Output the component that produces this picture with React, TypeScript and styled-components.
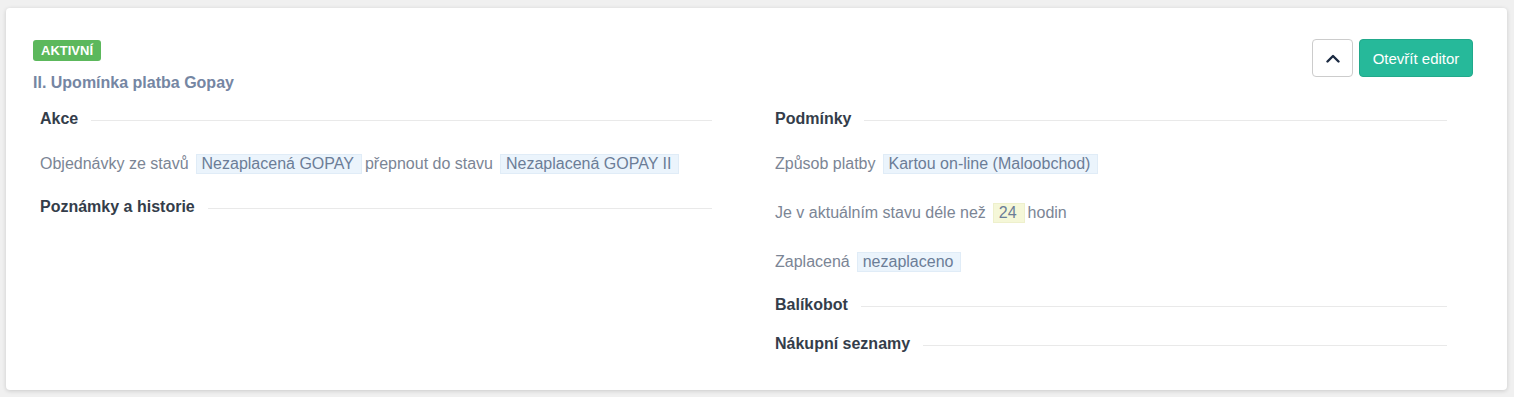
import styled, { createGlobalStyle } from "styled-components";

const GlobalStyle = createGlobalStyle`
  * { box-sizing: border-box; }
  body {
    margin: 0;
    background: #f0f0f0;
    font-family: "Liberation Sans", Arial, sans-serif;
  }
`;

const Page = styled.div`
  padding: 8px 7px 8px 6px;
`;

const Card = styled.div`
  background: #ffffff;
  border-radius: 4px;
  box-shadow: 0 1px 4px rgba(0, 0, 0, 0.16);
  padding: 31px 34px 17px 27px;
`;

const Header = styled.div`
  display: flex;
  justify-content: space-between;
  align-items: flex-start;
  margin-bottom: 16px;
`;

const HeaderInfo = styled.div`
  display: flex;
  flex-direction: column;
  align-items: flex-start;
`;

const Badge = styled.span`
  display: inline-block;
  margin-top: 1px;
  height: 21px;
  line-height: 21px;
  padding: 0 8px;
  border-radius: 3px;
  background: #5cb85c;
  color: #ffffff;
  font-size: 13px;
  font-weight: 700;
  text-transform: uppercase;
`;

const Title = styled.div`
  margin-top: 12px;
  font-size: 16px;
  line-height: 20px;
  font-weight: 700;
  color: #7586a3;
`;

const Actions = styled.div`
  display: flex;
  gap: 6px;
`;

const IconButton = styled.button`
  display: flex;
  align-items: center;
  justify-content: center;
  width: 41px;
  height: 38px;
  padding: 0;
  border: 1px solid #cccccc;
  border-radius: 4px;
  background: #ffffff;
  cursor: pointer;
`;

const PrimaryButton = styled.button`
  width: 114px;
  height: 38px;
  padding: 0;
  border: 1px solid #21a98b;
  border-radius: 4px;
  background: #26b99a;
  color: #ffffff;
  font-family: inherit;
  font-size: 15px;
  cursor: pointer;
`;

const Columns = styled.div`
  display: grid;
  grid-template-columns: 1fr 1fr;
  column-gap: 63px;
  padding: 0 26px 0 7px;
`;

const Column = styled.div`
  display: flex;
  flex-direction: column;
`;

const SectionHeading = styled.div`
  display: flex;
  align-items: center;
  gap: 13px;
  margin-bottom: 19px;
  font-size: 16px;
  line-height: 20px;
  font-weight: 700;
  color: #343d4a;

  &::after {
    content: "";
    flex: 1;
    height: 1px;
    margin-top: 3px;
    background: #e9e9e9;
  }
`;

const Row = styled.div`
  display: flex;
  align-items: center;
  height: 20px;
  margin: 6px 0 23px;
  font-size: 16px;
  color: #7b8595;
  white-space: nowrap;

  &:last-of-type {
    margin-bottom: 24px;
  }
`;

const Tag = styled.span<{ $tone?: "blue" | "yellow" }>`
  display: inline-block;
  height: 20px;
  line-height: 18px;
  margin: 0 3px 0 7px;
  padding: 0 7px 0 5px;
  border: 1px solid
    ${(p) => (p.$tone === "yellow" ? "#eef0cc" : "#e0ecf7")};
  background: ${(p) => (p.$tone === "yellow" ? "#f5f7d8" : "#ebf4fc")};
  color: #6b7d97;
`;

function ChevronUp() {
  return (
    <svg width="14" height="9" viewBox="0 0 14 9" fill="none">
      <polyline
        points="1.5,7.5 7,2 12.5,7.5"
        stroke="#1b2a42"
        strokeWidth="2.4"
        strokeLinecap="round"
        strokeLinejoin="round"
      />
    </svg>
  );
}

export default function App() {
  return (
    <Page>
      <GlobalStyle />
      <Card>
        <Header>
          <HeaderInfo>
            <Badge>Aktivní</Badge>
            <Title>II. Upomínka platba Gopay</Title>
          </HeaderInfo>
          <Actions>
            <IconButton type="button" aria-label="sbalit">
              <ChevronUp />
            </IconButton>
            <PrimaryButton type="button">Otevřít editor</PrimaryButton>
          </Actions>
        </Header>

        <Columns>
          <Column>
            <SectionHeading>Akce</SectionHeading>
            <Row>
              Objednávky ze stavů
              <Tag>Nezaplacená GOPAY</Tag>
              přepnout do stavu
              <Tag>Nezaplacená GOPAY II</Tag>
            </Row>
            <SectionHeading>Poznámky a historie</SectionHeading>
          </Column>

          <Column>
            <SectionHeading>Podmínky</SectionHeading>
            <Row>
              Způsob platby
              <Tag>Kartou on-line (Maloobchod)</Tag>
            </Row>
            <Row>
              Je v aktuálním stavu déle než
              <Tag $tone="yellow">24</Tag>
              hodin
            </Row>
            <Row>
              Zaplacená
              <Tag>nezaplaceno</Tag>
            </Row>
            <SectionHeading>Balíkobot</SectionHeading>
            <SectionHeading>Nákupní seznamy</SectionHeading>
          </Column>
        </Columns>
      </Card>
    </Page>
  );
}
